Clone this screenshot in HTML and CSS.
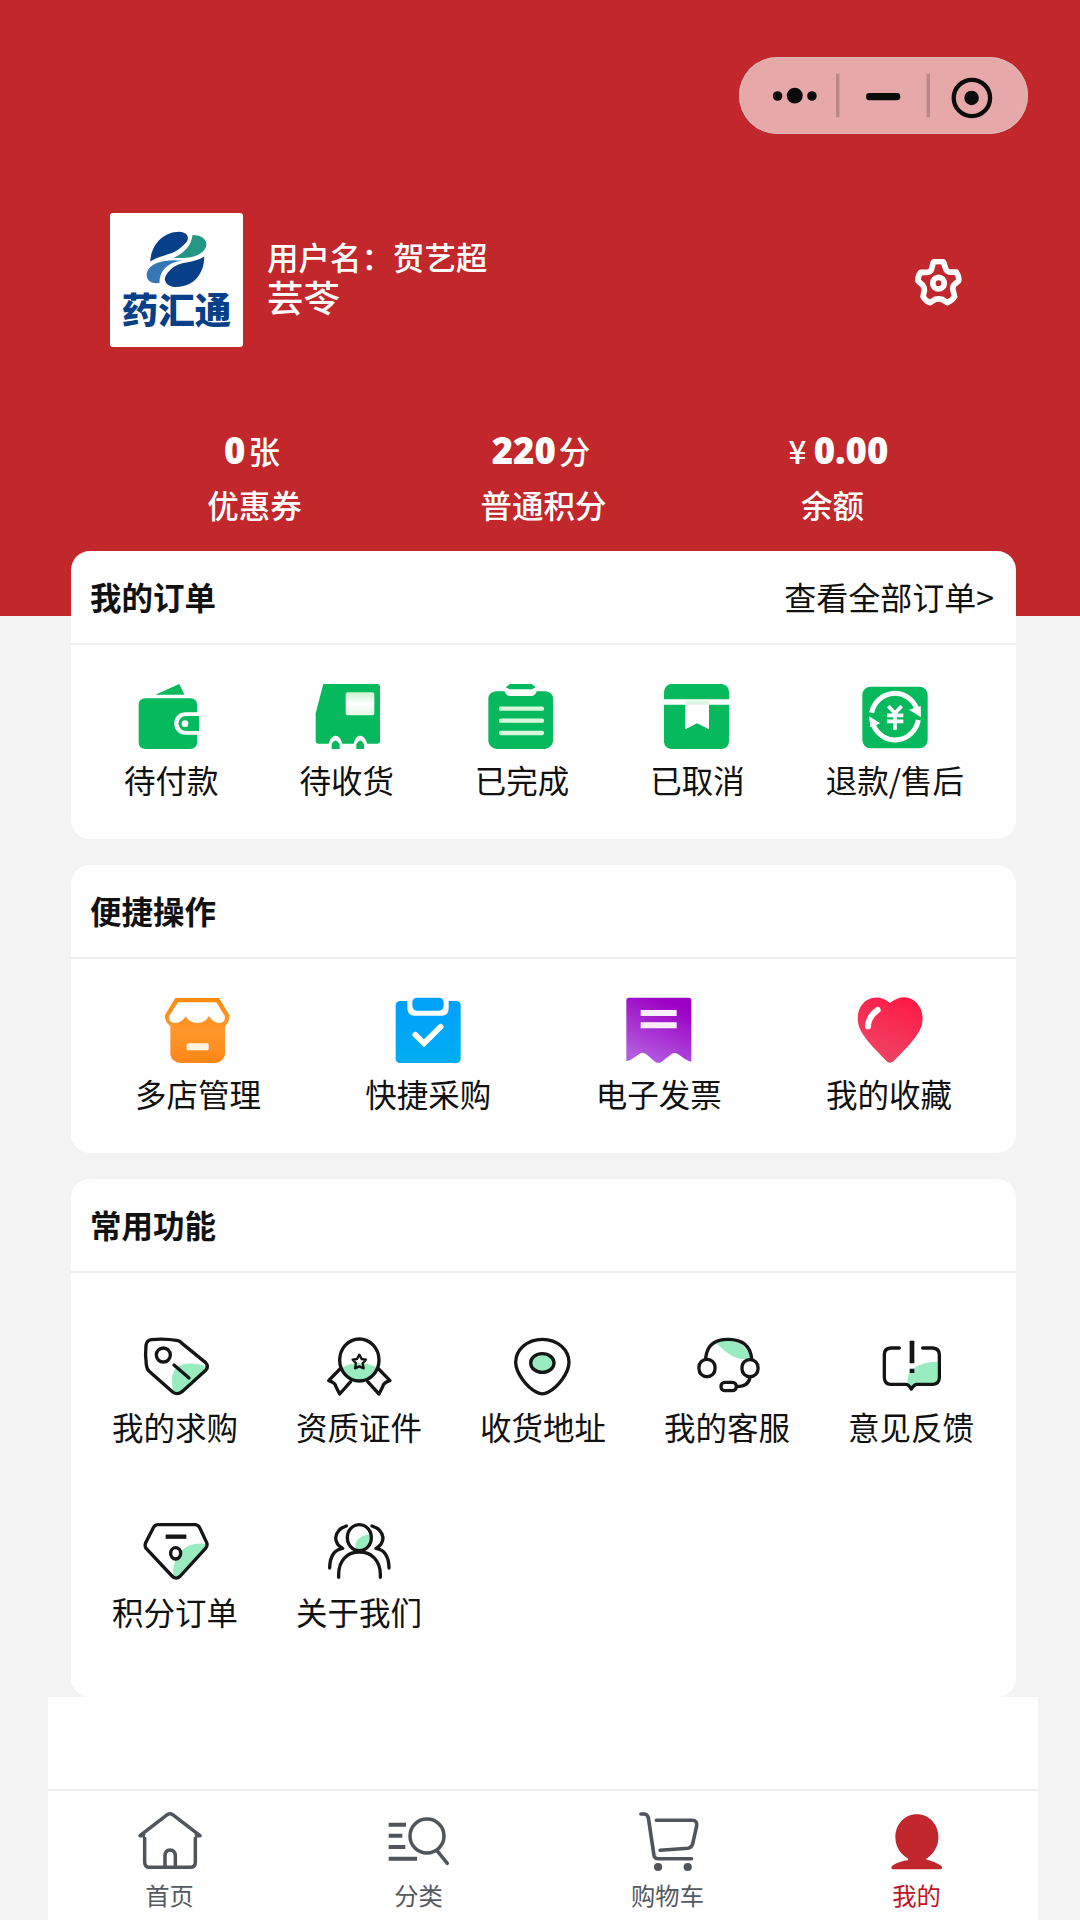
FILE: index.html
```html
<!DOCTYPE html>
<html lang="zh-CN">
<head>
<meta charset="utf-8">
<title>药汇通 - 我的</title>
<link rel="stylesheet" href="styles.css">
</head>
<body>
<div class="screen">
<div class="phone">
  <header class="hero">
    <div class="capsule">
      <svg class="capsule-art" viewBox="57 50 867 233">
        <g fill="#0c0c0c"><circle cx="170" cy="168" r="14.500"/><circle cx="222" cy="167" r="24"/><circle cx="274" cy="168" r="14.500"/><rect x="438" y="159" width="103" height="22" rx="9"/><circle cx="757" cy="174" r="22"/></g>
        <circle cx="758" cy="174" r="55" fill="none" stroke="#0c0c0c" stroke-width="13"/>
        <path d="M352 101V232M626 101V232" stroke="#b98789" stroke-width="10"/>
      </svg>
    </div>
    <div class="profile">
      <div class="logo">
        <svg class="logo-mark" viewBox="160 118 195 178">
          <path d="M178 213C181 165 215 123 266 123C291 124 298 142 287 155C272 172 262 178 246 187C224 195 199 199 178 213Z" fill="#073f88"/>
          <path d="M306 133C337 134 351 149 347 167C340 190 310 206 249 202C277 189 302 168 306 133Z" fill="#239684"/>
          <path d="M275 211C230 215 206 241 206 278C178 281 165 269 168 247C176 216 226 205 275 211Z" fill="#3678b6"/>
          <path d="M341 198C342 248 310 291 254 290C229 289 217 272 225 256C242 228 263 220 288 216C308 213 326 208 341 198Z" fill="#073f88"/>
        </svg>
        <span class="logo-name">药汇通</span>
      </div>
      <div class="user">
        <div class="user-name">用户名：贺艺超</div>
        <div class="user-shop">芸苓</div>
      </div>
      <svg class="gear" viewBox="585 658 140 140" fill="none" stroke="#fff" stroke-width="17" stroke-linejoin="round">
        <path d="M640 667Q655 664 670 667L677 689Q682 697 691 697L708 697Q717 710 715 723L700 736Q697 743 698 750L703 770Q695 783 681 788L665 778Q655 775 645 778L630 788Q616 783 609 770L613 750Q613 743 608 736L594 723Q593 709 602 698L620 698Q631 697 634 689Z"/>
        <circle cx="655" cy="730" r="17"/>
      </svg>
    </div>
    <div class="stats">
      <div class="stat"><div class="stat-value stat-shift"><b>0</b>张</div><div>优惠券</div></div>
      <div class="stat"><div class="stat-value stat-shift"><b>220</b>分</div><div>普通积分</div></div>
      <div class="stat"><div class="stat-value stat-money">¥ <b>0.00</b></div><div>余额</div></div>
    </div>
  </header>

  <main class="cards">
    <section class="card">
      <div class="card-head"><h2>我的订单</h2><a class="more">查看全部订单&gt;</a></div>
      <div class="row row-orders">
        <div class="item">
          <svg class="icon" viewBox="234 72 198 198" fill="#05b95c"><path d="M286 104L358 72L373 104Z"/><path d="M257 115H391Q411 115 411 135V157H376A33 33 0 0 0 376 224H411V247Q411 267 391 267H257Q236 267 236 247V135Q236 115 257 115Z"/><path d="M378 168H417V213H378A22 22 0 0 1 378 168Z"/><circle cx="375" cy="191" r="10" fill="#fff"/></svg>
          <span>待付款</span>
        </div>
        <div class="item">
          <svg class="icon" viewBox="760 72 198 198" fill="#05b95c"><defs><linearGradient id="window" x2="0" y2="1"><stop stop-color="#c9f3cf"/><stop offset=".5" stop-color="#fff"/><stop offset="1" stop-color="#e2f9e6"/></linearGradient></defs><path d="M788 72H949Q958 72 958 82V244Q958 251 950 251H920Q912 227 898 227Q884 227 879 251H845Q838 227 825 227Q811 227 804 251H774Q765 251 765 243V160Z"/><rect x="855" y="97" width="86" height="69" rx="6" fill="url(#window)"/><path d="M813 267V252Q824 231 837 252V267ZM887 267V252Q898 231 910 252V267Z"/></svg>
          <span>待收货</span>
        </div>
        <div class="item">
          <svg class="icon" viewBox="1287 72 198 198"><path d="M1308 94H1334Q1338 108 1350 108H1414Q1426 108 1430 94H1455Q1479 97 1479 116V243Q1477 262 1456 267H1309Q1287 263 1285 243V116Q1286 96 1308 94ZM1350 72H1415L1427 82L1416 88H1349L1337 82Z" fill="#05b95c"/><path d="M1323 146H1446M1323 182H1446M1323 219H1446" stroke="#d8f8dd" stroke-width="13" stroke-linecap="round"/></svg>
          <span>已完成</span>
        </div>
        <div class="item">
          <svg class="icon" viewBox="312 72 198 198"><path d="M333 72H486Q507 76 507 97V118H312V97Q314 74 333 72ZM312 134H376V208L411 190L447 208V134H507V246Q505 264 486 267H333Q314 264 312 246Z" fill="#05b95c"/><path d="M376 122H447V134H376Z" fill="#dcf7e3"/></svg>
          <span>已取消</span>
        </div>
        <div class="item">
          <svg class="icon" viewBox="903 72 198 198"><rect x="904" y="80" width="196" height="185" rx="25" fill="#05b95c"/><g fill="none" stroke="#fff" stroke-width="15"><path d="M932 158A71 74 0 0 1 1067 146M1072 180A71 74 0 0 1 937 195"/><path d="M982 138L1002 160L1022 138M1002 158V209M978 166H1027M978 184H1027" stroke-width="11"/></g><path d="M1044 149L1079 138L1080 172ZM924 169L958 190L928 202Z" fill="#fff"/></svg>
          <span>退款/售后</span>
        </div>
      </div>
    </section>

    <section class="card">
      <div class="card-head"><h2>便捷操作</h2></div>
      <div class="row row-quick">
        <div class="item">
          <svg class="icon" viewBox="317 113 198 198"><defs><linearGradient id="store" x2="0" y2="1"><stop stop-color="#ff890e"/><stop offset=".5" stop-color="#ff982c"/><stop offset="1" stop-color="#ff8617"/></linearGradient></defs><path d="M348 113H479L510 164Q512 182 497 198V282Q494 303 470 308H361Q336 304 333 282V198Q315 183 317 164Z" fill="url(#store)"/><path d="M356 126H471L496 166Q500 188 478 188Q460 186 449 167Q438 188 414 188Q389 188 379 168Q368 188 346 188Q325 186 330 166Z" fill="#fff"/><rect x="382" y="249" width="66" height="21" rx="4" fill="#fff3e4"/></svg>
          <span>多店管理</span>
        </div>
        <div class="item">
          <svg class="icon" viewBox="1008 113 198 198"><defs><linearGradient id="clip" x2="0" y2="1"><stop stop-color="#009fff"/><stop offset="1" stop-color="#00aef0"/></linearGradient></defs><path d="M1022 122H1045V145Q1047 165 1066 166H1150Q1168 164 1169 145V122H1193Q1205 123 1205 134V296Q1204 307 1193 308H1022Q1011 307 1010 296V134Q1011 123 1022 122Z" fill="url(#clip)"/><rect x="1060" y="112" width="94" height="39" rx="14" fill="#00a2fa"/><path d="M1069 223L1095 249L1145 199" fill="none" stroke="#fff" stroke-width="17" stroke-linecap="round"/></svg>
          <span>快捷采购</span>
        </div>
        <div class="item">
          <svg class="icon" viewBox="196 113 198 198"><defs><linearGradient id="bill" x1=".75" x2=".35" y1=".1" y2="1"><stop stop-color="#9b00c3"/><stop offset="1" stop-color="#b35ce0"/></linearGradient></defs><path d="M205 112H384Q392 112 392 120V304Q383 302 373 296L351 281Q341 275 332 282L303 304Q293 311 283 304L257 282Q246 274 237 280L214 296Q205 302 197 302V120Q197 112 205 112Z" fill="url(#bill)"/><path d="M249 158H339M249 195H339" stroke="#fbefff" stroke-width="18" stroke-linecap="square"/></svg>
          <span>电子发票</span>
        </div>
        <div class="item">
          <svg class="icon" viewBox="886 113 198 198"><defs><linearGradient id="heart" x1=".8" x2=".4" y2="1"><stop stop-color="#ff1944"/><stop offset="1" stop-color="#ee4565"/></linearGradient></defs><path d="M988 128C1012 108 1039 106 1059 120C1086 140 1093 177 1078 208C1064 238 1024 276 999 302Q988 312 977 302C952 274 914 240 899 208C884 176 891 138 918 120C939 107 964 108 988 128Z" fill="url(#heart)"/><path d="M922 198Q923 169 951 149" fill="none" stroke="#fff" stroke-width="18" stroke-linecap="round"/></svg>
          <span>我的收藏</span>
        </div>
      </div>
    </section>

    <section class="card card-tools">
      <div class="card-head"><h2>常用功能</h2></div>
      <div class="tools">
        <div class="item">
          <svg class="icon line" viewBox="246 81 198 180"><path class="mint" d="M437 168Q360 148 341 184Q331 210 340 248L354 252L442 178Z"/><path d="M274 89Q314 85 354 92Q361 94 366 100L436 157Q447 168 438 180L366 245Q352 256 338 246L270 186Q260 179 259 164Q255 134 258 106Q260 91 274 89ZM342 165L387 204"/><circle cx="310" cy="135" r="21"/></svg>
          <span>我的求购</span>
        </div>
        <div class="item">
          <svg class="icon line" viewBox="798 81 198 180"><path class="mint" d="M847 172Q897 146 950 172Q941 209 898 213Q860 209 847 172Z"/><ellipse cx="898" cy="150" rx="59" ry="63"/><path d="M840 177L806 212Q826 218 828 230L839 252L872 215M956 177L990 212Q970 218 968 230L957 252L923 215"/><path d="M898 134L905 147L918 149L908 160L911 175L898 169L885 175L888 160L878 149L891 147Z" stroke-width="7"/></svg>
          <span>资质证件</span>
        </div>
        <div class="item">
          <svg class="icon line" viewBox="1350 81 198 180"><path d="M1447 88C1494 88 1527 121 1527 157C1526 190 1494 231 1464 247Q1447 256 1430 247C1400 231 1368 190 1367 157C1367 121 1400 88 1447 88Z"/><ellipse cx="1447" cy="159" rx="35" ry="28" fill="#98ecc0"/></svg>
          <span>收货地址</span>
        </div>
        <div class="item">
          <svg class="icon line" viewBox="402 81 198 180"><path class="mint" d="M470 99Q511 80 547 106Q570 126 573 147Q535 153 504 130Q481 113 470 99Z"/><path d="M437 144Q443 87 506 88Q569 89 575 146M570 202Q566 230 530 230"/><rect x="417" y="148" width="48" height="52" rx="23"/><rect x="546" y="149" width="48" height="51" rx="23"/><rect x="483" y="217" width="46" height="25" rx="12"/></svg>
          <span>我的客服</span>
        </div>
        <div class="item">
          <svg class="icon line" viewBox="954 81 198 180"><path class="mint" d="M1132 156H1114Q1069 161 1048 190Q1040 206 1043 221L1054 231L1065 222H1132Z"/><path d="M1018 114H992Q973 115 973 134V203Q974 223 992 223H1038Q1045 223 1054 237Q1063 223 1071 223H1119Q1137 222 1138 203V134Q1137 115 1119 114H1088"/><path d="M1056 92V160M1056 176V189" stroke-width="14" stroke-linecap="butt"/></svg>
          <span>意见反馈</span>
        </div>
        <div class="item">
          <svg class="icon line" viewBox="246 639 198 180"><path class="mint" d="M441 705Q392 698 365 724Q333 763 341 804L350 808L441 715Z"/><path d="M292 647H407Q415 648 419 656L440 701Q444 711 436 719L361 801Q348 814 336 801L259 719Q253 711 257 701L280 656Q284 648 292 647Z"/><path d="M317 683H379" stroke-width="13" stroke-linecap="butt"/><ellipse cx="347" cy="733" rx="15" ry="17"/></svg>
          <span>积分订单</span>
        </div>
        <div class="item">
          <svg class="icon line" viewBox="798 639 198 180"><path class="mint" d="M930 676Q902 679 890 697Q882 709 890 720Q924 728 930 690Z"/><ellipse cx="898" cy="686" rx="36" ry="39"/><path d="M836 805V795C837 754 862 729 898 729C934 729 960 754 961 795V805M859 651Q830 660 827 686Q827 706 848 718Q810 724 809 777M936 651Q966 660 969 686Q969 706 948 718Q986 724 987 777"/></svg>
          <span>关于我们</span>
        </div>
      </div>
    </section>
  </main>

  <nav class="tabs">
    <div class="tab">
      <svg class="icon tab-line" viewBox="321 393 198 180"><path d="M330 467H344V547Q345 562 358 562H483Q496 561 496 547V467H510L428 404Q420 399 412 404ZM405 562V527Q406 511 420 510Q435 511 436 527V562"/><path d="M350 467H490" stroke="#fff"/></svg>
      <span>首页</span>
    </div>
    <div class="tab">
      <svg class="icon tab-line" viewBox="1066 393 198 180"><circle cx="1189" cy="468" r="51"/><path d="M1219 512L1250 550"/><path d="M1074 434H1126M1074 467H1115M1074 501H1124M1074 536H1159" stroke-width="12" stroke-linecap="butt"/></svg>
      <span>分类</span>
    </div>
    <div class="tab">
      <svg class="icon tab-line" viewBox="276 393 191.600 180" preserveAspectRatio="none"><path d="M293 402H303Q313 403 315 415L331 526Q333 536 343 536H440M338 421H443Q458 423 455 438L443 493Q440 503 430 505L349 511"/><g fill="#50555b" stroke="none"><ellipse cx="343" cy="561" rx="12" ry="12"/><ellipse cx="429" cy="561" rx="12" ry="12"/></g></svg>
      <span>购物车</span>
    </div>
    <div class="tab active">
      <svg class="icon" viewBox="999 393 191.600 180" preserveAspectRatio="none"><path d="M1094 403C1131 403 1157 434 1157 472C1157 503 1139 526 1120 538Q1145 544 1165 557Q1171 564 1164 568H1024Q1017 564 1023 557Q1044 543 1069 541V536C1047 523 1032 500 1032 472C1032 434 1058 403 1094 403Z" fill="#c1272d"/></svg>
      <span>我的</span>
    </div>
  </nav>
</div>
</div>
</body>
</html>
```
FILE: styles.css
```css
* { box-sizing: border-box; }

body {
  margin: 0;
  background: #f3f3f3;
  color: #111;
  font-family: "Noto Sans CJK SC", sans-serif;
  font-size: 31.5px;
}

.screen {
  height: 1920px;
  overflow: hidden;
  background: linear-gradient(#c1272b 616px, #f3f3f3 616px);
}

.phone {
  width: 990px;
  height: 1920px;
  margin-left: 48px;
  display: flex;
  flex-direction: column;
}

.hero {
  height: 551px;
  padding-top: 57px;
  color: #fff;
  font-weight: 500;
}

.capsule {
  width: 289px;
  height: 77px;
  margin-left: 691px;
  border-radius: 39px;
  background: #e6a8a8;
  box-shadow: inset 0 0 0 1px #d9b9bb;
}

.capsule-art {
  display: block;
  width: 289px;
  height: 77px;
}

.profile {
  display: flex;
  margin-top: 79px;
  padding-left: 62px;
}

.logo {
  width: 133px;
  height: 134px;
  padding-top: 17px;
  display: flex;
  flex-direction: column;
  align-items: center;
  border-radius: 3px;
  background: #fff;
}

.logo-mark {
  width: 65px;
  height: 59px;
}

.logo-name {
  color: #073f88;
  font-size: 36.5px;
  font-weight: 900;
  line-height: 40px;
  white-space: nowrap;
}

.user {
  width: 672px;
  padding: 22px 0 0 24px;
  white-space: nowrap;
}

.user-name {
  line-height: 42px;
}

.user-shop {
  font-size: 36.5px;
  line-height: 40px;
}

.gear {
  width: 47px;
  height: 47px;
  margin-top: 46px;
}

.stats {
  display: flex;
  margin-top: 77px;
  padding-left: 62px;
}

.stat {
  width: 289px;
  text-align: center;
  line-height: 52px;
}

.stat-value {
  height: 54px;
}

.stat-shift { padding-right: 5px; }

.stat-money { padding-left: 12px; }

.stat-value b {
  font-family: "Open Sans", sans-serif;
  font-size: 36.5px;
  font-weight: 800;
}

.stat-shift b { margin-right: 3px; }

.cards {
  display: flex;
  flex-direction: column;
  gap: 26px;
  padding: 0 22px 0 23px;
}

.card {
  height: 288px;
  border-radius: 19px;
  background: #fff;
}

.card-tools { height: 518px; }

.card-head {
  display: flex;
  justify-content: space-between;
  height: 94px;
  padding: 0 22px 0 19px;
  border-bottom: 2px solid #eee;
  line-height: 91px;
}

.card-head h2 {
  margin: 0;
  font-size: 31.5px;
  font-weight: 700;
}

.more {
  font-size: 32px;
  font-weight: 400;
}

.row {
  display: flex;
  justify-content: space-between;
  padding-top: 39px;
}

.row-orders { padding-left: 53px; padding-right: 52px; }

.row-quick { padding-left: 64px; padding-right: 64px; }

.item {
  display: flex;
  flex-direction: column;
  align-items: center;
  line-height: 40px;
  white-space: nowrap;
}

.item span { margin-top: 9px; }

.icon {
  display: block;
  width: 66px;
  height: 66px;
  overflow: visible;
}

.tools {
  display: grid;
  grid-template-columns: repeat(5, 184px);
  grid-auto-rows: 185px;
  padding: 64px 0 0 12px;
}

.line {
  height: 60px;
  fill: none;
  stroke: #151515;
  stroke-width: 10px;
  stroke-linecap: round;
  stroke-linejoin: round;
}

.line .mint {
  fill: #98ecc0;
  stroke: none;
}

.tabs {
  display: flex;
  flex: 1;
  padding-top: 92px;
  background: linear-gradient(#fff 92px, #eee 92px, #eee 94px, #fff 94px);
}

.tab {
  display: flex;
  flex-direction: column;
  align-items: center;
  width: 249px;
  flex: none;
  padding-top: 22px;
  color: #555a60;
  font-size: 24.3px;
  line-height: 36px;
}

.tab:first-child { margin-left: -3px; }

.tab span { margin-top: 6px; }

.tab .icon { height: 60px; }

.tab-line {
  fill: none;
  stroke: #50555b;
  stroke-width: 10.5px;
  stroke-linecap: round;
  stroke-linejoin: round;
}

.active { color: #c1121f; }
```
